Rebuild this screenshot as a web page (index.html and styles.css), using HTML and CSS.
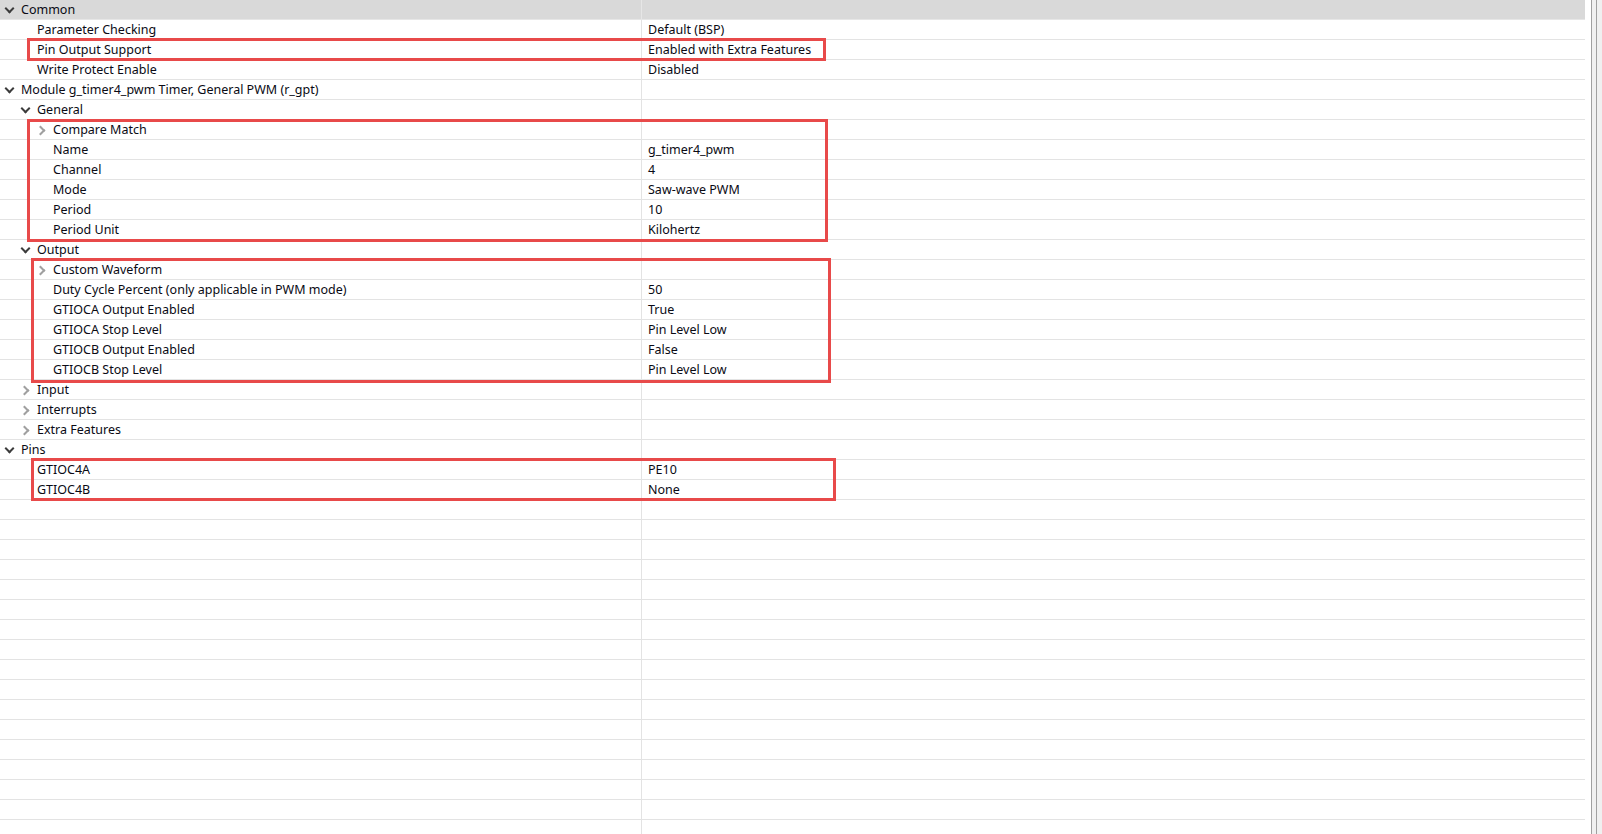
FILE: index.html
```html
<!DOCTYPE html>
<html>
<head>
<meta charset="utf-8">
<link rel="stylesheet" href="styles.css">
</head>
<body>
<div class="frame">
  <div class="table">
    <div class="row head l0"><div class="prop"><span class="tw down"></span><span class="txt">Common</span></div><div class="val"></div></div>
    <div class="row l1"><div class="prop"><span class="tw"></span><span class="txt">Parameter Checking</span></div><div class="val">Default (BSP)</div></div>
    <div class="row l1"><div class="prop"><span class="tw"></span><span class="txt">Pin Output Support</span></div><div class="val">Enabled with Extra Features</div></div>
    <div class="row l1"><div class="prop"><span class="tw"></span><span class="txt">Write Protect Enable</span></div><div class="val">Disabled</div></div>
    <div class="row l0"><div class="prop"><span class="tw down"></span><span class="txt">Module g_timer4_pwm Timer, General PWM (r_gpt)</span></div><div class="val"></div></div>
    <div class="row l1"><div class="prop"><span class="tw down"></span><span class="txt">General</span></div><div class="val"></div></div>
    <div class="row l2"><div class="prop"><span class="tw right"></span><span class="txt">Compare Match</span></div><div class="val"></div></div>
    <div class="row l2"><div class="prop"><span class="tw"></span><span class="txt">Name</span></div><div class="val">g_timer4_pwm</div></div>
    <div class="row l2"><div class="prop"><span class="tw"></span><span class="txt">Channel</span></div><div class="val">4</div></div>
    <div class="row l2"><div class="prop"><span class="tw"></span><span class="txt">Mode</span></div><div class="val">Saw-wave PWM</div></div>
    <div class="row l2"><div class="prop"><span class="tw"></span><span class="txt">Period</span></div><div class="val">10</div></div>
    <div class="row l2"><div class="prop"><span class="tw"></span><span class="txt">Period Unit</span></div><div class="val">Kilohertz</div></div>
    <div class="row l1"><div class="prop"><span class="tw down"></span><span class="txt">Output</span></div><div class="val"></div></div>
    <div class="row l2"><div class="prop"><span class="tw right"></span><span class="txt">Custom Waveform</span></div><div class="val"></div></div>
    <div class="row l2"><div class="prop"><span class="tw"></span><span class="txt">Duty Cycle Percent (only applicable in PWM mode)</span></div><div class="val">50</div></div>
    <div class="row l2"><div class="prop"><span class="tw"></span><span class="txt">GTIOCA Output Enabled</span></div><div class="val">True</div></div>
    <div class="row l2"><div class="prop"><span class="tw"></span><span class="txt">GTIOCA Stop Level</span></div><div class="val">Pin Level Low</div></div>
    <div class="row l2"><div class="prop"><span class="tw"></span><span class="txt">GTIOCB Output Enabled</span></div><div class="val">False</div></div>
    <div class="row l2"><div class="prop"><span class="tw"></span><span class="txt">GTIOCB Stop Level</span></div><div class="val">Pin Level Low</div></div>
    <div class="row l1"><div class="prop"><span class="tw right"></span><span class="txt">Input</span></div><div class="val"></div></div>
    <div class="row l1"><div class="prop"><span class="tw right"></span><span class="txt">Interrupts</span></div><div class="val"></div></div>
    <div class="row l1"><div class="prop"><span class="tw right"></span><span class="txt">Extra Features</span></div><div class="val"></div></div>
    <div class="row l0"><div class="prop"><span class="tw down"></span><span class="txt">Pins</span></div><div class="val"></div></div>
    <div class="row l1"><div class="prop"><span class="tw"></span><span class="txt">GTIOC4A</span></div><div class="val">PE10</div></div>
    <div class="row l1"><div class="prop"><span class="tw"></span><span class="txt">GTIOC4B</span></div><div class="val">None</div></div>
    <div class="row"><div class="prop"></div><div class="val"></div></div>
    <div class="row"><div class="prop"></div><div class="val"></div></div>
    <div class="row"><div class="prop"></div><div class="val"></div></div>
    <div class="row"><div class="prop"></div><div class="val"></div></div>
    <div class="row"><div class="prop"></div><div class="val"></div></div>
    <div class="row"><div class="prop"></div><div class="val"></div></div>
    <div class="row"><div class="prop"></div><div class="val"></div></div>
    <div class="row"><div class="prop"></div><div class="val"></div></div>
    <div class="row"><div class="prop"></div><div class="val"></div></div>
    <div class="row"><div class="prop"></div><div class="val"></div></div>
    <div class="row"><div class="prop"></div><div class="val"></div></div>
    <div class="row"><div class="prop"></div><div class="val"></div></div>
    <div class="row"><div class="prop"></div><div class="val"></div></div>
    <div class="row"><div class="prop"></div><div class="val"></div></div>
    <div class="row"><div class="prop"></div><div class="val"></div></div>
    <div class="row"><div class="prop"></div><div class="val"></div></div>
    <div class="row"><div class="prop"></div><div class="val"></div></div>

    <div class="mark m1"></div>
    <div class="mark m2"></div>
    <div class="mark m3"></div>
    <div class="mark m4"></div>
  </div>
  <div class="gutter">
    <div class="gap"></div>
    <div class="line"></div>
    <div class="track"></div>
    <div class="line"></div>
    <div class="rest"></div>
  </div>
</div>
</body>
</html>
```

FILE: styles.css
```css
html, body {
  margin: 0;
  padding: 0;
  background: #ffffff;
  overflow: hidden;
}
.frame {
  display: flex;
  width: 1602px;
  height: 834px;
  overflow: hidden;
}
.table {
  position: relative;
  width: 1585px;
  flex: none;
  height: 834px;
  overflow: hidden;
  font-family: "Noto Sans", "Noto Sans CJK SC", sans-serif;
  font-size: 12.5px;
  color: #0a0a14;
}
.row {
  display: flex;
  height: 20px;
  box-sizing: border-box;
  border-bottom: 1px solid #e3e3e3;
}
.row.head {
  background: #d9d9d9;
  border-bottom-color: #e6e6e6;
}
.prop {
  width: 642px;
  flex: none;
  box-sizing: border-box;
  border-right: 1px solid #e3e3e3;
  display: flex;
  align-items: center;
  white-space: nowrap;
}
.row.head .prop { border-right-color: #e6e6e6; }
.l0 .prop { padding-left: 0; }
.l1 .prop { padding-left: 16px; }
.l2 .prop { padding-left: 32px; }
.tw {
  width: 16px;
  height: 19px;
  flex: none;
  position: relative;
}
.tw.down::before {
  content: "";
  position: absolute;
  left: 6px;
  top: 5px;
  width: 5px;
  height: 5px;
  border-right: 2px solid #3c3c3c;
  border-bottom: 2px solid #3c3c3c;
  transform: rotate(45deg);
}
.tw.right::before {
  content: "";
  position: absolute;
  left: 5px;
  top: 7px;
  width: 5px;
  height: 5px;
  border-right: 2px solid #a0a0a0;
  border-bottom: 2px solid #a0a0a0;
  transform: rotate(-45deg);
}
.txt {
  padding-left: 5px;
  line-height: 19px;
}
.val {
  flex: 1;
  padding-left: 6px;
  line-height: 19px;
  white-space: nowrap;
}
.mark {
  position: absolute;
  box-sizing: border-box;
  border: 3px solid #e84a4a;
}
.m1 { left: 27px; top: 38px; width: 799px; height: 23px; }
.m2 { left: 27px; top: 119px; width: 801px; height: 123px; }
.m3 { left: 31px; top: 258px; width: 800px; height: 125px; }
.m4 { left: 31px; top: 458px; width: 805px; height: 43px; }
.gutter {
  flex: 1;
  display: flex;
  height: 834px;
}
.gap { width: 6px; background: #ffffff; }
.line { width: 1px; background: #a0a0a0; }
.track { width: 4px; background: #f0f0f0; }
.rest { flex: 1; background: #f0f0f0; }
```
